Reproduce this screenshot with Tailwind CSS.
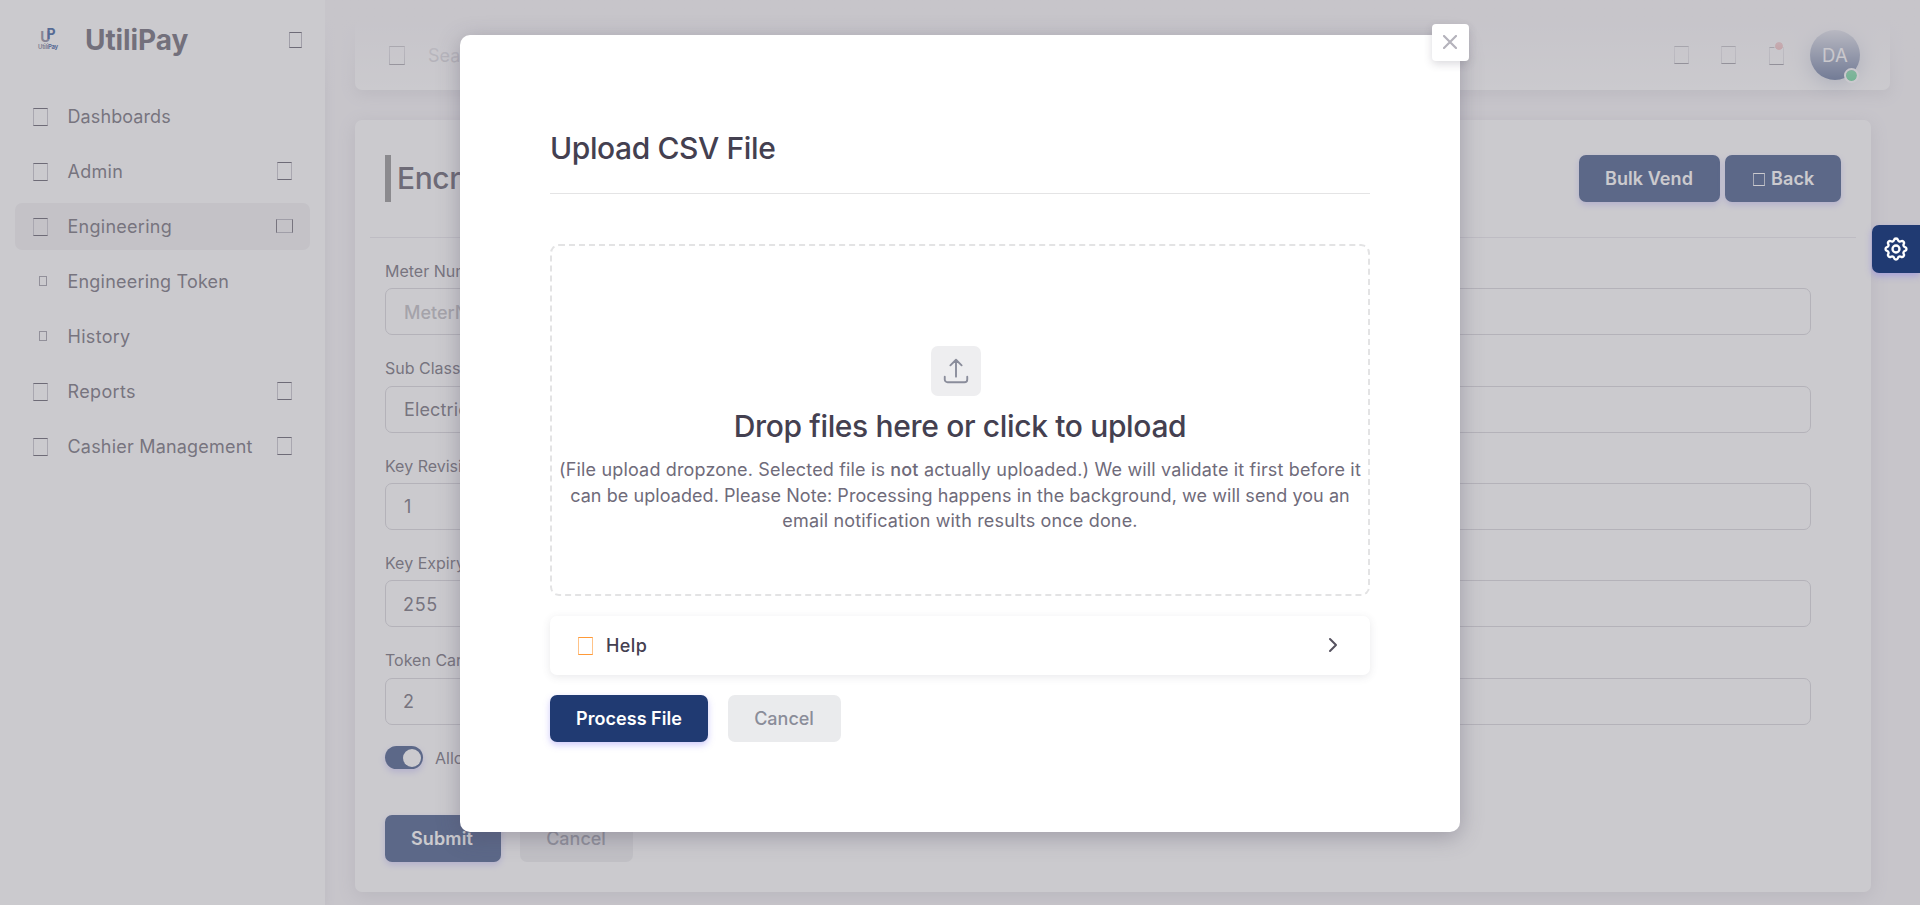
<!DOCTYPE html>
<html lang="en">
<head>
<meta charset="utf-8">
<title>UtiliPay</title>
<script src="https://cdn.jsdelivr.net/npm/@tailwindcss/browser@4"></script>
</head>
<body class="relative h-[905px] overflow-hidden bg-[#f6f4f7] font-[Inter,sans-serif] text-[18px] leading-[25px] text-[#56525f]">

<!-- Page -->
<div class="flex h-[905px]">
  <aside class="flex h-full w-[325px] shrink-0 flex-col bg-white shadow-[0_2px_10px_rgba(75,70,92,0.12)]">
    <div class="flex h-20 items-center pl-[37px] pr-[23px]">
      <div class="mb-[2px] flex w-[22px] flex-col items-center">
        <div class="flex h-[14px] items-start text-[14px] font-bold leading-[14px]"><span class="mt-[2px] text-[#75738a]">U</span><span class="-ml-[4px] -mt-px text-[#12408c]">P</span></div>
        <div class="mt-[2px] flex text-[6px] font-bold leading-[6px] tracking-[-0.3px]"><span class="text-[#75738a]">Utili</span><span class="text-[#12408c]">Pay</span></div>
      </div>
      <span class="mb-px ml-[26px] text-[28px] font-bold leading-8 tracking-[-0.1px] text-[#4e4a5a]">UtiliPay</span>
      <i class="ml-auto h-[16px] w-[13px] border border-x-[#a9a7b2] border-y-[#444050]"></i>
    </div>
    <nav class="mt-[13px] flex flex-col gap-2 px-[15px]">
      <div class="flex h-[47px] items-center pl-[18px] pr-[18px]">
        <i class="mt-px h-[18px] w-[15px] border border-x-[#bbb9c2] border-y-[#444050]"></i>
        <span class="ml-[19.500px] tracking-[0.1px]">Dashboards</span>
      </div>
      <div class="flex h-[47px] items-center pl-[18px] pr-[18px]">
        <i class="mt-px h-[18px] w-[15px] border border-x-[#bbb9c2] border-y-[#444050]"></i>
        <span class="ml-[19.500px] tracking-[0.300px]">Admin</span>
        <i class="mb-px ml-auto h-[18px] w-[15px] border border-x-[#bbb9c2] border-y-[#444050]"></i>
      </div>
      <div class="flex h-[47px] items-center rounded-[7px] bg-[#f0eff1] pl-[18px] pr-[17px]">
        <i class="mt-px h-[18px] w-[15px] border border-x-[#bbb9c2] border-y-[#444050]"></i>
        <span class="ml-[19.500px] tracking-[0.270px]">Engineering</span>
        <i class="mb-px ml-auto h-[14px] w-[17px] border border-x-[#56525f] border-y-[#a9a7b2]"></i>
      </div>
      <div class="flex h-[47px] items-center pl-[24px]">
        <i class="mb-px h-[10px] w-[8px] border border-[#8c8a96]"></i>
        <span class="ml-[20.500px] tracking-[0.200px]">Engineering Token</span>
      </div>
      <div class="flex h-[47px] items-center pl-[24px]">
        <i class="mb-px h-[10px] w-[8px] border border-[#8c8a96]"></i>
        <span class="ml-[20.500px] tracking-[0.300px]">History</span>
      </div>
      <div class="flex h-[47px] items-center pl-[18px] pr-[18px]">
        <i class="mt-px h-[18px] w-[15px] border border-x-[#bbb9c2] border-y-[#444050]"></i>
        <span class="ml-[19.500px] tracking-[0.350px]">Reports</span>
        <i class="mb-px ml-auto h-[18px] w-[15px] border border-x-[#bbb9c2] border-y-[#444050]"></i>
      </div>
      <div class="flex h-[47px] items-center pl-[18px] pr-[18px]">
        <i class="mt-px h-[18px] w-[15px] border border-x-[#bbb9c2] border-y-[#444050]"></i>
        <span class="ml-[19.500px] tracking-[0.200px]">Cashier Management</span>
        <i class="mb-px ml-auto h-[18px] w-[15px] border border-x-[#bbb9c2] border-y-[#444050]"></i>
      </div>
    </nav>
  </aside>

  <main class="flex-1 pl-[30px] pr-[30px] pt-5">
    <header class="flex h-[70px] items-center rounded-[7px] bg-white pl-[34px] pr-[30px] shadow-[0_4px_16px_rgba(75,70,92,0.14)]">
      <i class="h-[19px] w-[16px] border border-x-[#a9a7b2] border-y-[#56525f]"></i>
      <span class="ml-[23px] text-[#b2b0ba]">Search (Ctrl+/)</span>
      <i class="ml-auto h-[18px] w-[15px] border border-x-[#c4c2cb] border-y-[#444050]"></i>
      <i class="ml-8 h-[18px] w-[15px] border border-x-[#c4c2cb] border-y-[#444050]"></i>
      <div class="relative ml-[33px] mt-[2px] h-[18px] w-[15px] border border-x-[#c4c2cb] border-y-[#444050]">
        <span class="absolute -top-[6px] left-[5px] size-2 rounded-full bg-[#ea5455] outline-1 outline-white"></span>
      </div>
      <div class="relative ml-[26px] flex size-[50px] items-center justify-center rounded-full bg-[#203a72] text-[18.500px] tracking-[0.35px] text-white shadow-[0_0_22px_rgba(32,58,114,0.45)]">DA
        <span class="absolute -bottom-px right-[3px] size-[11px] rounded-full bg-[#28c76f] outline-2 outline-white"></span>
      </div>
    </header>

    <section class="mr-[19px] mt-[30px] h-[772px] rounded-[7px] bg-white px-[15px] shadow-[0_4px_18px_rgba(75,70,92,0.16)]">
      <div class="flex h-[118px] items-start border-b border-[#e4e3e8] px-[15px] pt-[35px]">
        <h1 class="flex h-[47px] items-center border-l-[6px] border-[#7f7f7f] pl-[6px] text-[30px] font-medium tracking-[-0.4px] text-[#444050]">Encryption Token</h1>
        <button class="ml-auto h-[47px] w-[141px] rounded-[7px] bg-[#203a72] pr-px font-semibold tracking-[0.075px] text-white shadow-[0_3px_7px_rgba(115,103,240,0.35)]">Bulk Vend</button>
        <button class="ml-[5px] flex h-[47px] w-[116px] items-center rounded-[7px] bg-[#203a72] pl-[28px] font-semibold tracking-[0.1px] text-white shadow-[0_3px_7px_rgba(115,103,240,0.35)]"><i class="mr-[6px] mt-[2px] h-[13px] w-[12px] border border-x-white/70 border-y-white"></i>Back</button>
      </div>
      <form class="pl-[15px] pr-[45px] pt-[21px] text-[16px]">
        <label class="block h-[29px]">Meter Number</label>
        <div class="flex h-[47px] items-center rounded-[7px] border border-[#d0ced4] pl-[18px] pt-px text-[18px] font-medium text-[#b2b0b6]">MeterNumber</div>
        <label class="mt-[21px] block h-[30px]">Sub Class</label>
        <div class="flex h-[47px] items-center rounded-[7px] border border-[#d0ced4] pl-[18px] text-[18px] tracking-[0.15px]">Electricity</div>
        <label class="mt-[21px] block h-[29px]">Key Revision Number</label>
        <div class="flex h-[47px] items-center rounded-[7px] border border-[#d0ced4] pl-[18px] text-[18px]">1</div>
        <label class="mt-[21px] block h-[29px]">Key Expiry Number</label>
        <div class="flex h-[47px] items-center rounded-[7px] border border-[#d0ced4] pl-[17px] pt-px text-[18px] tracking-[0.7px]">255</div>
        <label class="mt-[21px] block h-[30px]">Token Carrier</label>
        <div class="flex h-[47px] items-center rounded-[7px] border border-[#d0ced4] pl-[17px] text-[18px]">2</div>
        <div class="mt-[20px] flex h-[25px] items-center">
          <span class="flex h-[23px] w-[38px] items-center justify-end rounded-full bg-[#203a72] pr-[2px] shadow-[0_3px_7px_rgba(115,103,240,0.35)]"><span class="size-[18px] rounded-full bg-white"></span></span>
          <span class="ml-[12px] pt-px">Allow</span>
        </div>
        <div class="mt-[45px] flex gap-[19px] text-[18px]">
          <button type="button" class="h-[47px] w-[116px] rounded-[7px] bg-[#203a72] pr-[2px] font-semibold tracking-[0.12px] text-white shadow-[0_3px_7px_rgba(115,103,240,0.35)]">Submit</button>
          <button type="button" class="h-[47px] w-[113px] rounded-[7px] bg-[#eaebed] pr-px font-medium text-[#8a8d99]">Cancel</button>
        </div>
      </form>
    </section>
  </main>
</div>

<!-- Fade over the top of the content area -->
<div class="absolute left-[325px] right-0 top-0 h-[96px] bg-linear-to-b from-[#f6f4f7] from-20% to-[#f6f4f7]/0"></div>

<!-- Backdrop -->
<div class="absolute inset-0 bg-[#97959e]/50"></div>

<!-- Theme settings tab -->
<div class="absolute right-0 top-[225px] flex h-12 w-12 items-center justify-center rounded-l-[7px] bg-[#203a72] shadow-[0_3px_7px_rgba(115,103,240,0.4)]">
  <svg class="size-[28px]" viewBox="0 0 24 24" fill="none" stroke="#fff" stroke-width="2" stroke-linecap="round" stroke-linejoin="round"><path d="M10.325 4.317c.426-1.756 2.924-1.756 3.35 0a1.724 1.724 0 0 0 2.573 1.066c1.543-.94 3.31.826 2.37 2.37a1.724 1.724 0 0 0 1.065 2.572c1.756.426 1.756 2.924 0 3.35a1.724 1.724 0 0 0-1.066 2.573c.94 1.543-.826 3.31-2.37 2.37a1.724 1.724 0 0 0-2.572 1.065c-.426 1.756-2.924 1.756-3.35 0a1.724 1.724 0 0 0-2.573-1.066c-1.543.94-3.31-.826-2.37-2.37a1.724 1.724 0 0 0-1.065-2.572c-1.756-.426-1.756-2.924 0-3.35a1.724 1.724 0 0 0 1.066-2.573c-.94-1.543.826-3.31 2.37-2.37 1 .608 2.296.07 2.572-1.065z"/><circle cx="12" cy="12" r="3"/></svg>
</div>

<!-- Upload dialog -->
<div class="absolute left-[460px] top-[35px] h-[797px] w-[1000px] rounded-[10px] bg-white px-[90px] pt-[90px] shadow-[0_5px_22px_rgba(75,70,92,0.35)]">
  <button class="absolute -right-[9px] -top-[11px] flex size-[37px] items-center justify-center rounded-[4px] bg-white pb-px pr-px shadow-[0_3px_8px_rgba(75,70,92,0.2)]">
    <svg class="size-[14px]" viewBox="0 0 14 14" fill="none" stroke="#b5b3bc" stroke-width="2.2" stroke-linecap="round"><path d="M1 1l12 12M13 1L1 13"/></svg>
  </button>
  <h2 class="flex h-[48px] items-center pb-[2px] text-[30px] font-medium tracking-[-0.4px] text-[#444050]">Upload CSV File</h2>
  <hr class="mt-[20px] border-[#e4e4e5]">
  <div class="mt-[50px] flex h-[352px] flex-col items-center rounded-[9px] border-2 border-dashed border-[#e3e3e4] pt-[100px] text-[#6f6b7a]">
    <div class="mr-2 flex size-[50px] items-center justify-center rounded-[7px] bg-[#eeeef0]">
      <svg class="size-[30px]" viewBox="0 0 24 24" fill="none" stroke="#8a8d9b" stroke-width="1.5" stroke-linecap="round" stroke-linejoin="round"><path d="M3 16.5v2.25A2.25 2.25 0 0 0 5.25 21h13.5A2.25 2.25 0 0 0 21 18.75V16.500M7.500 7.500 12 3l4.500 4.500M12 3v13.500"/></svg>
    </div>
    <div class="mt-[12px] h-[36px] text-[30px] font-medium leading-[36px] tracking-[-0.35px] text-[#444050]">Drop files here or click to upload</div>
    <div class="mt-[13px] flex flex-col items-center whitespace-nowrap leading-[25.5px]">
      <span class="tracking-[0.16px]">(File upload dropzone. Selected file is <span class="font-medium">not</span> actually uploaded.) We will validate it first before it</span>
      <span class="tracking-[0.065px]">can be uploaded. Please Note: Processing happens in the background, we will send you an</span>
      <span class="tracking-[0.17px]">email notification with results once done.</span>
    </div>
  </div>
  <div class="mt-[20px] flex h-[59px] items-center rounded-[7px] bg-white pl-7 pr-[29px] text-[#444050] shadow-[0_2px_8px_rgba(75,70,92,0.12)]">
    <i class="mt-px h-[18px] w-[15px] border border-x-[#ffc388] border-y-[#ff9a38]"></i>
    <span class="mb-px ml-[13px] font-medium tracking-[0.4px]">Help</span>
    <svg class="mb-[2px] ml-auto h-[16px] w-[18px]" viewBox="0 0 18 16" fill="none" stroke="#56525f" stroke-width="2" stroke-linecap="round" stroke-linejoin="round"><path d="M7 2l6 6-6 6"/></svg>
  </div>
  <div class="mt-5 flex gap-5">
    <button class="h-[47px] w-[158px] rounded-[7px] bg-[#203a72] font-semibold tracking-[0.03px] text-white shadow-[0_3px_7px_rgba(115,103,240,0.35)]">Process File</button>
    <button class="h-[47px] w-[113px] rounded-[7px] bg-[#eaebed] pr-px font-medium text-[#8a8d99]">Cancel</button>
  </div>
</div>
</body>
</html>
